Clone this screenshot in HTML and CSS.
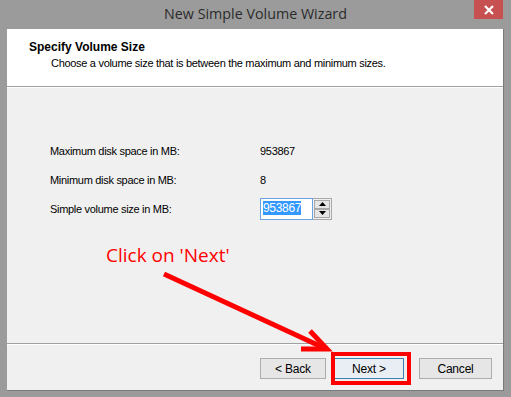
FILE: index.html
```html
<!DOCTYPE html>
<html lang="en">

<head>
    <meta charset="UTF-8">
    <title>New Simple Volume Wizard</title>
    <link rel="stylesheet" href="styles.css">
</head>

<body>
    <div class="titlebar">
        <span class="title">New Simple Volume Wizard</span>
        <button class="close-button">
            <svg width="12" height="10" viewBox="0 0 12 10">
                <path d="M2 1 L10 9 M10 1 L2 9" stroke="#fff" stroke-width="2.2" />
            </svg>
        </button>
    </div>

    <div class="client">
        <!-- cabeçalho do assistente -->
        <div class="wizard-header">
            <h1>Specify Volume Size</h1>
            <p>Choose a volume size that is between the maximum and minimum sizes.</p>
        </div>

        <div class="wizard-body">
            <div class="field-row">
                <span class="field-label">Maximum disk space in MB:</span>
                <span class="field-value">953867</span>
            </div>
            <div class="field-row">
                <span class="field-label">Minimum disk space in MB:</span>
                <span class="field-value">8</span>
            </div>
            <div class="field-row">
                <span class="field-label">Simple volume size in MB:</span>
                <div class="spinner">
                    <div class="spinner-input"><span class="selected">953867</span></div>
                    <div class="spinner-buttons">
                        <span class="spin-btn">
                            <svg width="7" height="4" viewBox="0 0 7 4"><path d="M3.5 0 L7 4 L0 4 Z" fill="#000" /></svg>
                        </span>
                        <span class="spin-btn">
                            <svg width="7" height="4" viewBox="0 0 7 4"><path d="M0 0 L7 0 L3.5 4 Z" fill="#000" /></svg>
                        </span>
                    </div>
                </div>
            </div>
        </div>

        <div class="wizard-footer">
            <button class="button">&lt; Back</button>
            <button class="button button-default">Next &gt;</button>
            <button class="button button-cancel">Cancel</button>
        </div>
    </div>

    <!-- anotação em vermelho -->
    <div class="annotation-text">Click on 'Next'</div>
    <div class="annotation-box"></div>
    <svg class="annotation-arrow" width="511" height="397" viewBox="0 0 511 397">
        <path d="M164 274 L322 347" stroke="#f00" stroke-width="5" fill="none" />
        <path d="M310 331 L327 349 L301 349" stroke="#f00" stroke-width="5" fill="none" stroke-linejoin="miter" />
    </svg>
</body>

</html>
```

FILE: styles.css
```css
/* Estilo global */
body {
    margin: 0;
    width: 511px;
    height: 397px;
    background-color: #9b9b9b;
    font-family: "Liberation Sans", Arial, sans-serif;
    font-size: 11px;
    letter-spacing: -0.3px;
    color: #000;
    position: relative;
    overflow: hidden;
}

/* barra de título */
.titlebar {
    height: 29px;
    text-align: center;
    letter-spacing: 0;
}

.title {
    display: inline-block;
    padding-top: 4px;
    font-family: "Open Sans", sans-serif;
    font-size: 14.3px;
    color: #2b2b2b;
}

.close-button {
    position: absolute;
    top: 0;
    right: 8px;
    width: 29px;
    height: 19px;
    border: none;
    padding: 0;
    background-color: #c75050;
    display: flex;
    align-items: center;
    justify-content: center;
}

/* área cliente da janela */
.client {
    margin-left: 7px;
    width: 497px;
    height: 362px;
    background-color: #f0f0f0;
    display: flex;
    flex-direction: column;
    border-right: 1px solid #7a7a7a;
    border-bottom: 1px solid #7a7a7a;
    box-sizing: border-box;
}

.wizard-header {
    height: 58px;
    background-color: #fff;
    border-bottom: 1px solid #a0a0a0;
    box-shadow: 0 1px 0 #fff;
    padding-left: 22px;
    box-sizing: border-box;
}

.wizard-header h1 {
    margin: 11px 0 0;
    font-size: 12px;
    font-weight: bold;
    letter-spacing: 0;
}

.wizard-header p {
    margin: 3px 0 0 22px;
}

/* corpo do assistente */
.wizard-body {
    flex: 1;
    padding: 49px 0 0 43px;
}

.field-row {
    display: flex;
    align-items: center;
    height: 29px;
}

.field-label {
    width: 210px;
}

.spinner {
    display: flex;
    align-items: center;
}

.spinner-input {
    width: 53px;
    height: 22px;
    border: 1px solid #6aa3e0;
    box-sizing: border-box;
    background-color: #fff;
    padding: 2px 2px 0;
    font-size: 12px;
}

.selected {
    background-color: #3399ff;
    color: #fff;
}

.spinner-buttons {
    height: 22px;
    border: 1px solid #a8a8a8;
    border-left: none;
    box-sizing: border-box;
    padding: 1px;
    display: flex;
    flex-direction: column;
    justify-content: space-between;
}

.spin-btn {
    width: 14px;
    height: 8px;
    border: 1px solid #a8a8a8;
    background-color: #e5e5e5;
    display: flex;
    align-items: center;
    justify-content: center;
}

/* rodapé com botões */
.wizard-footer {
    height: 47px;
    border-top: 1px solid #a0a0a0;
    box-shadow: inset 0 1px 0 #fff;
    display: flex;
    align-items: flex-start;
    padding: 14px 0 0 253px;
    box-sizing: border-box;
}

.button {
    width: 66px;
    height: 21px;
    border: 1px solid #adadad;
    background-color: #e6e6e6;
    font-family: "Liberation Sans", Arial, sans-serif;
    font-size: 12px;
    letter-spacing: -0.2px;
    padding: 0;
    margin-right: 8px;
}

.button-default {
    width: 70px;
    border-color: #3c7fb1;
    background-color: #e8eef4;
    margin-right: 15px;
}

.button-cancel {
    width: 73px;
    margin-right: 0;
}

/* anotações */
.annotation-text {
    position: absolute;
    left: 106px;
    top: 242px;
    font-family: "Open Sans", sans-serif;
    font-size: 19px;
    letter-spacing: 0;
    color: #f00;
}

.annotation-box {
    position: absolute;
    left: 331px;
    top: 352px;
    width: 80px;
    height: 33px;
    border: 4px solid #f00;
    box-sizing: border-box;
}

.annotation-arrow {
    position: absolute;
    left: 0;
    top: 0;
}
```
